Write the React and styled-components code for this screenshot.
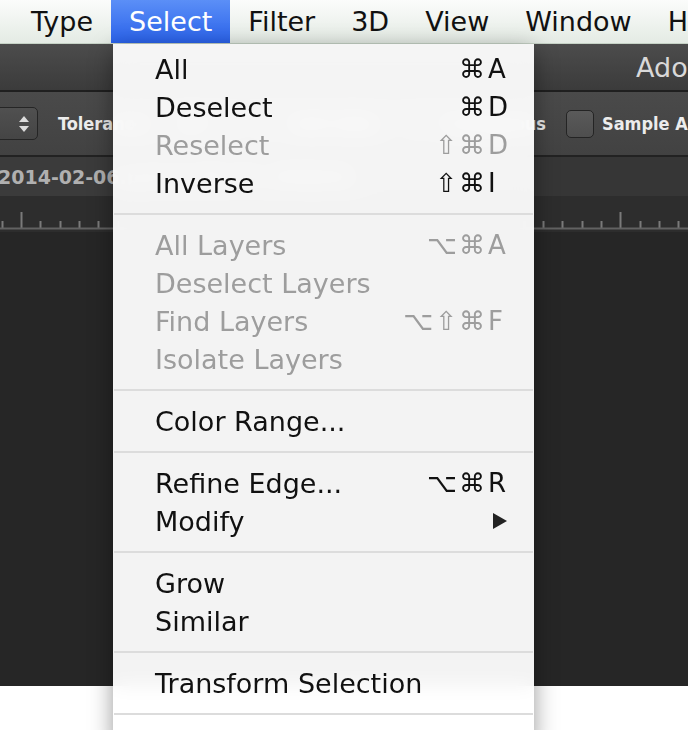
import React from "react";
import styled, { createGlobalStyle } from "styled-components";

const GlobalStyle = createGlobalStyle`
  html, body {
    margin: 0;
    padding: 0;
    background: #fff;
    overflow: hidden;
  }
  body {
    font-family: "DejaVu Sans", Verdana, sans-serif;
  }
`;

const Screen = styled.div`
  position: relative;
  width: 688px;
  height: 730px;
  overflow: hidden;
  display: flex;
  flex-direction: column;
  background: #fff;
`;

const MenuBar = styled.div`
  height: 43px;
  flex: none;
  display: flex;
  padding-left: 13px;
  border-bottom: 1px solid #c6d2c6;
  background: linear-gradient(#fbfcfb, #e4ebe4);
`;

const MenuTitle = styled.div`
  display: flex;
  align-items: center;
  padding: 0 18px;
  font-size: 27px;
  white-space: nowrap;
  color: ${(p) => (p.$active ? "#fff" : "#111")};
  background: ${(p) =>
    p.$active ? "linear-gradient(#5b8ff7, #2a62ea)" : "transparent"};
`;

const Workspace = styled.div`
  flex: 1;
  display: flex;
  flex-direction: column;
  background: #262626;
`;

const TitleBar = styled.div`
  height: 46px;
  flex: none;
  display: flex;
  align-items: center;
  padding-left: 636px;
  font-size: 27px;
  color: #d8d8d8;
  white-space: nowrap;
  background: linear-gradient(#4c4c4c, #3b3b3b);
  border-bottom: 2px solid #1f1f1f;
`;

const OptionsBar = styled.div`
  height: 63px;
  flex: none;
  display: flex;
  align-items: center;
  white-space: nowrap;
  background: linear-gradient(#4a4a4a, #424242);
  border-bottom: 2px solid #222;
  font-family: "DejaVu Sans Condensed", "DejaVu Sans", sans-serif;
  font-weight: bold;
  font-size: 18px;
  color: #ececec;
`;

const OptionsCluster = styled.div`
  flex: 0 0 586px;
  margin-left: -40px;
  display: flex;
  align-items: center;
  justify-content: space-between;
`;

const OptionGroup = styled.div`
  display: flex;
  align-items: center;
  gap: ${(p) => p.$gap || 8}px;
  margin-left: ${(p) => p.$offset || 0}px;
`;

const Stepper = styled.div`
  width: 70px;
  height: 31px;
  border: 1px solid #252525;
  border-radius: 5px;
  background: linear-gradient(#505050, #454545);
  display: flex;
  align-items: center;
  justify-content: flex-end;
  padding-right: 6px;
  box-sizing: content-box;
`;

const NumberField = styled.div`
  width: 56px;
  height: 28px;
  border: 1px solid #262626;
  background: #545454;
  display: flex;
  align-items: center;
  padding-left: 6px;
  font-weight: normal;
`;

const CheckBox = styled.div`
  width: 26px;
  height: 26px;
  border: 1px solid #242424;
  border-radius: 5px;
  background: linear-gradient(#5a5a5a, #4e4e4e);
`;

const TabBar = styled.div`
  height: 39px;
  flex: none;
  display: flex;
  background: #363636;
`;

const DocTab = styled.div`
  display: flex;
  align-items: center;
  margin-left: -2px;
  padding-right: 20px;
  background: #3b3b3b;
  font-weight: bold;
  font-size: 19px;
  color: #b0b0b0;
  white-space: nowrap;
`;

const Ruler = styled.div`
  height: 36px;
  flex: none;
  background: #2d2d2d;
  svg {
    display: block;
  }
`;

const Canvas = styled.div`
  flex: 1;
  background: #262626;
`;

const Desktop = styled.div`
  height: 44px;
  flex: none;
  background: #fff;
`;

const Dropdown = styled.div`
  position: absolute;
  top: 44px;
  left: 113px;
  width: 421px;
  height: 700px;
  padding-top: 6px;
  box-sizing: border-box;
  background: rgba(255, 255, 255, 0.945);
  backdrop-filter: blur(10px);
  box-shadow: 0 6px 22px rgba(0, 0, 0, 0.4);
`;

const Item = styled.div`
  height: 38px;
  display: grid;
  grid-template-columns: 1fr auto 24px;
  align-items: center;
  padding: 0 23px 0 42px;
  font-size: 27px;
  white-space: nowrap;
  color: ${(p) => (p.$disabled ? "#9d9d9d" : "#111")};
`;

const Mods = styled.span`
  text-align: right;
  letter-spacing: 2px;
  font-size: 26px;
`;

const Key = styled.span`
  padding-left: 1px;
  display: flex;
  align-items: center;
  font-size: 26px;
`;

const Separator = styled.div`
  height: 24px;
  display: flex;
  align-items: center;
  padding: 0 1px;
  &::after {
    content: "";
    flex: 1;
    height: 2px;
    background: #dcdcdc;
  }
`;

const StepArrows = () => (
  <svg width="14" height="20" viewBox="0 0 14 20">
    <polygon points="7,2 12,8 2,8" fill="#dcdcdc" />
    <polygon points="2,12 12,12 7,18" fill="#dcdcdc" />
  </svg>
);

const SubArrow = () => (
  <svg width="16" height="18" viewBox="0 0 16 18" style={{ marginLeft: 4 }}>
    <polygon points="1,1 15,9 1,17" fill="#222" />
  </svg>
);

const RulerTicks = () => {
  const step = 19.33;
  const ticks = [];
  for (let i = 0; i < 37; i++) {
    const x = Math.round(21 - step + i * step) + 0.5;
    const tall = i === 1 || i === 32;
    ticks.push(
      <line key={i} x1={x} x2={x} y1={tall ? 16 : 25} y2={32} stroke="#7a7a7a" strokeWidth="2" />
    );
  }
  return (
    <svg width="688" height="36" viewBox="0 0 688 36">
      {ticks}
      <line x1="0" x2="688" y1="32.5" y2="32.5" stroke="#626262" strokeWidth="2" />
    </svg>
  );
};

const menuTitles = ["Type", "Select", "Filter", "3D", "View", "Window", "Help"];

const menu = [
  { label: "All", mods: "⌘", key: "A" },
  { label: "Deselect", mods: "⌘", key: "D" },
  { label: "Reselect", mods: "⇧⌘", key: "D", disabled: true },
  { label: "Inverse", mods: "⇧⌘", key: "I" },
  { sep: true },
  { label: "All Layers", mods: "⌥⌘", key: "A", disabled: true },
  { label: "Deselect Layers", disabled: true },
  { label: "Find Layers", mods: "⌥⇧⌘", key: "F", disabled: true },
  { label: "Isolate Layers", disabled: true },
  { sep: true },
  { label: "Color Range..." },
  { sep: true },
  { label: "Refine Edge...", mods: "⌥⌘", key: "R" },
  { label: "Modify", submenu: true },
  { sep: true },
  { label: "Grow" },
  { label: "Similar" },
  { sep: true },
  { label: "Transform Selection" },
  { sep: true },
  { label: "Edit in Quick Mask Mode" },
];

const App = () => (
  <>
    <GlobalStyle />
    <Screen>
      <MenuBar>
        {menuTitles.map((t) => (
          <MenuTitle key={t} $active={t === "Select"}>
            {t}
          </MenuTitle>
        ))}
      </MenuBar>
      <Workspace>
        <TitleBar>Adobe Photoshop CC</TitleBar>
        <OptionsBar>
          <OptionsCluster>
            <OptionGroup $gap={20}>
              <Stepper>
                <StepArrows />
              </Stepper>
              <span>Tolerance:</span>
              <NumberField>32</NumberField>
              <OptionGroup>
                <CheckBox />
                <span>Anti-alias</span>
              </OptionGroup>
            </OptionGroup>
            <OptionGroup>
              <CheckBox />
              <span>Contiguous</span>
            </OptionGroup>
          </OptionsCluster>
          <OptionGroup $offset={20}>
            <CheckBox />
            <span>Sample All Layers</span>
          </OptionGroup>
        </OptionsBar>
        <TabBar>
          <DocTab>2014-02-06.psd @ 66.7% (RGB/8)</DocTab>
        </TabBar>
        <Ruler>
          <RulerTicks />
        </Ruler>
        <Canvas />
        <Desktop />
      </Workspace>
      <Dropdown>
        {menu.map((m, i) =>
          m.sep ? (
            <Separator key={i} />
          ) : (
            <Item key={i} $disabled={m.disabled}>
              <span>{m.label}</span>
              <Mods>{m.mods}</Mods>
              <Key>{m.submenu ? <SubArrow /> : m.key}</Key>
            </Item>
          )
        )}
      </Dropdown>
    </Screen>
  </>
);

export default App;
